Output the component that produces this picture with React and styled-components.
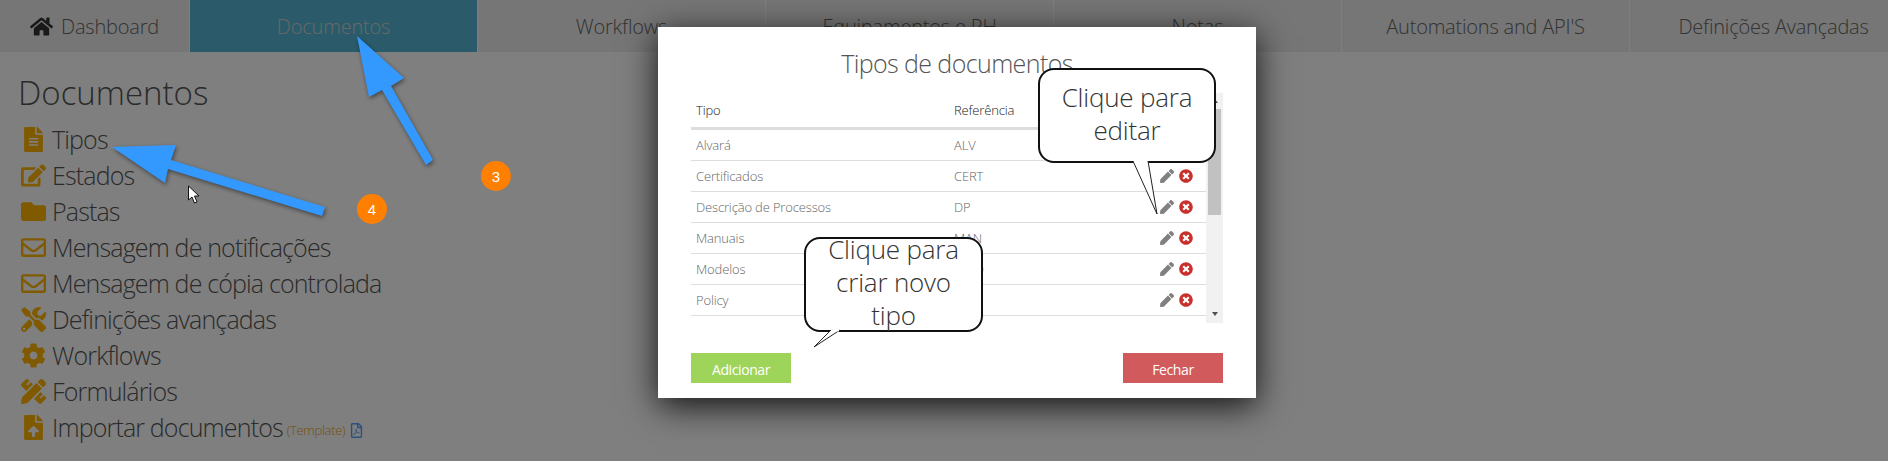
import React from 'react';
import styled, { createGlobalStyle } from 'styled-components';
import {
  FaHome,
  FaFileAlt,
  FaEdit,
  FaFolder,
  FaRegEnvelope,
  FaTools,
  FaCog,
  FaPencilRuler,
  FaFileUpload,
  FaRegFilePdf,
  FaPen,
  FaTimesCircle,
} from 'react-icons/fa';

const GlobalStyle = createGlobalStyle`
  html, body {
    margin: 0;
    padding: 0;
    background: #fff;
    overflow: hidden;
  }
  body {
    font-family: "Open Sans", "Liberation Sans", sans-serif;
    font-weight: 300;
  }
`;

const Page = styled.div`
  position: relative;
  width: 1888px;
  height: 461px;
  overflow: hidden;
`;

const Nav = styled.nav`
  display: grid;
  grid-template-columns: 190px repeat(6, 288px);
  height: 52px;
  background: #ececec;
`;

const NavItem = styled.div`
  display: flex;
  align-items: center;
  justify-content: center;
  gap: 8px;
  font-size: 20px;
  letter-spacing: -0.2px;
  color: ${({ $active }) => ($active ? '#d0d0d0' : '#666')};
  background: ${({ $active }) => ($active ? '#56b6d4' : 'transparent')};
  border-right: 1px solid #fff;
  box-sizing: border-box;
  svg {
    color: #333;
    font-size: 23px;
  }
`;

const Content = styled.main`
  padding: 19px 0 0 18px;
`;

const Heading = styled.h1`
  margin: 0 0 6px;
  font-size: 33px;
  line-height: 44px;
  font-weight: 300;
  color: #555;
`;

const Menu = styled.ul`
  list-style: none;
  margin: 0;
  padding: 0;
`;

const MenuRow = styled.li`
  display: flex;
  align-items: center;
  gap: 6px;
  height: 36px;
  padding-left: 3px;
  font-size: 25px;
  letter-spacing: -0.85px;
  color: #555;
`;

const MenuIcon = styled.span`
  display: flex;
  justify-content: center;
  width: 25px;
  font-size: 25px;
  color: #ffb400;
`;

const Note = styled.small`
  margin: 6px 0 0 -2px;
  font-size: 13px;
  letter-spacing: -0.3px;
  color: #e8a020;
`;

const PdfIcon = styled(FaRegFilePdf)`
  margin: 7px 0 0 -2px;
  font-size: 15px;
  color: #54a0ff;
`;

const Overlay = styled.div`
  position: absolute;
  inset: 0;
  background: rgba(0, 0, 0, 0.5);
`;

const Modal = styled.section`
  position: absolute;
  left: 658px;
  top: 27px;
  width: 598px;
  height: 371px;
  box-sizing: border-box;
  padding: 18px 33px 15px;
  display: flex;
  flex-direction: column;
  background: #fff;
  box-shadow: 0 8px 32px rgba(0, 0, 0, 0.85);
`;

const ModalTitle = styled.h2`
  margin: 0 0 12px;
  height: 36px;
  font-size: 25px;
  line-height: 36px;
  font-weight: 300;
  letter-spacing: -0.6px;
  text-align: center;
  color: #555;
`;

const TableWrap = styled.div`
  display: flex;
  height: 230px;
`;

const Table = styled.div`
  flex: 1;
`;

const Row = styled.div`
  display: grid;
  grid-template-columns: 258px 1fr 46px;
  align-items: center;
  height: ${({ $head }) => ($head ? '37px' : '31px')};
  box-sizing: border-box;
  padding-left: 5px;
  font-size: 13px;
  letter-spacing: -0.15px;
  color: ${({ $head }) => ($head ? '#222' : '#666')};
  border-bottom: ${({ $head }) => ($head ? '3px solid #ddd' : '1px solid #ddd')};
`;

const Actions = styled.div`
  display: flex;
  align-items: center;
  gap: 5px;
`;

const EditIcon = styled(FaPen)`
  font-size: 14px;
  color: #808080;
`;

const DeleteIcon = styled(FaTimesCircle)`
  font-size: 14px;
  color: #c9302c;
`;

const Scrollbar = styled.div`
  display: flex;
  flex-direction: column;
  align-items: center;
  justify-content: space-between;
  width: 17px;
  background: #f1f1f1;
`;

const ScrollThumb = styled.div`
  width: 13px;
  height: 106px;
  margin-top: 6px;
  margin-bottom: auto;
  background: #c1c1c1;
`;

const ScrollArrow = styled.i`
  width: 0;
  height: 0;
  margin: ${({ $up }) => ($up ? '6px 0 0' : '0 0 7px')};
  border-left: 3.5px solid transparent;
  border-right: 3.5px solid transparent;
  border-${({ $up }) => ($up ? 'bottom' : 'top')}: 4px solid #505050;
`;

const Footer = styled.div`
  display: flex;
  justify-content: space-between;
  margin-top: auto;
`;

const Button = styled.button`
  width: 100px;
  height: 30px;
  padding: 3px 0 0;
  border: 0;
  font-family: inherit;
  font-size: 14px;
  font-weight: 400;
  letter-spacing: -0.4px;
  color: #fff;
  background: ${({ $tone }) => ($tone === 'add' ? '#9fd45a' : '#d15a5c')};
`;

const Bubble = styled.div`
  position: absolute;
  left: ${({ $x }) => $x}px;
  top: ${({ $y }) => $y}px;
  width: ${({ $w }) => $w}px;
  height: ${({ $h }) => $h}px;
  box-sizing: border-box;
  display: flex;
  align-items: center;
  justify-content: center;
  padding-bottom: 4px;
  text-align: center;
  font-size: 26px;
  line-height: 33px;
  letter-spacing: -0.2px;
  color: #333;
  background: #fff;
  border: 2px solid #111;
  border-radius: 16px;
`;

const BubbleTail = styled.svg`
  position: absolute;
  left: -2px;
  top: -2px;
  overflow: visible;
`;

const BubbleText = styled.span`
  position: relative;
`;

const Drawing = styled.svg`
  position: absolute;
  left: 0;
  top: 0;
  filter: drop-shadow(1px 2px 2px rgba(0, 0, 0, 0.45));
`;

const Step = styled.div`
  position: absolute;
  left: ${({ $x }) => $x - 15}px;
  top: ${({ $y }) => $y - 15}px;
  width: 30px;
  height: 30px;
  display: flex;
  align-items: center;
  justify-content: center;
  border-radius: 50%;
  background: #ff8000;
  color: #fff;
  font-family: "Liberation Sans", sans-serif;
  font-size: 15px;
  font-weight: 400;
`;

const Cursor = styled.svg`
  position: absolute;
  left: 187px;
  top: 185px;
`;

const navItems = [
  'Documentos',
  'Workflows',
  'Equipamentos e RH',
  'Notas',
  "Automations and API'S",
  'Definições Avançadas',
];

const menu = [
  { icon: FaFileAlt, label: 'Tipos' },
  { icon: FaEdit, label: 'Estados' },
  { icon: FaFolder, label: 'Pastas' },
  { icon: FaRegEnvelope, label: 'Mensagem de notificações' },
  { icon: FaRegEnvelope, label: 'Mensagem de cópia controlada' },
  { icon: FaTools, label: 'Definições avançadas' },
  { icon: FaCog, label: 'Workflows' },
  { icon: FaPencilRuler, label: 'Formulários' },
  { icon: FaFileUpload, label: 'Importar documentos', template: true },
];

const rows = [
  ['Alvará', 'ALV'],
  ['Certificados', 'CERT'],
  ['Descrição de Processos', 'DP'],
  ['Manuais', 'MAN'],
  ['Modelos', 'MOD'],
  ['Policy', 'POL'],
];

const App = () => (
  <Page>
    <GlobalStyle />
    <Nav>
      <NavItem>
        <FaHome />
        Dashboard
      </NavItem>
      {navItems.map((item, i) => (
        <NavItem key={item} $active={i === 0}>{item}</NavItem>
      ))}
    </Nav>
    <Content>
      <Heading>Documentos</Heading>
      <Menu>
        {menu.map(({ icon: Icon, label, template }) => (
          <MenuRow key={label}>
            <MenuIcon><Icon /></MenuIcon>
            {label}
            {template && <Note>(Template)</Note>}
            {template && <PdfIcon />}
          </MenuRow>
        ))}
      </Menu>
    </Content>
    <Overlay />
    <Drawing width="1888" height="461" viewBox="0 0 1888 461">
      <polygon fill="#3399ff" points="357,36 404,78 391,86 433,160 426,165 382,90 369,97" />
      <polygon fill="#3399ff" points="112,147 176,145 171,160 325,207 322,216 168,169 165,183" />
    </Drawing>
    <Step $x={496} $y={176}>3</Step>
    <Step $x={372} $y={209}>4</Step>
    <Cursor width="14" height="20" viewBox="0 0 14 20">
      <path d="M1.5 1 L1.5 15 L5 12 L7.5 18 L10 17 L7.5 11 L12 11 Z" fill="#fff" stroke="#111" strokeWidth="1" />
    </Cursor>
    <Modal>
      <ModalTitle>Tipos de documentos</ModalTitle>
      <TableWrap>
        <Table>
          <Row $head>
            <span>Tipo</span>
            <span>Referência</span>
          </Row>
          {rows.map(([tipo, ref]) => (
            <Row key={tipo}>
              <span>{tipo}</span>
              <span>{ref}</span>
              <Actions>
                <EditIcon />
                <DeleteIcon />
              </Actions>
            </Row>
          ))}
        </Table>
        <Scrollbar>
          <ScrollArrow $up />
          <ScrollThumb />
          <ScrollArrow />
        </Scrollbar>
      </TableWrap>
      <Footer>
        <Button $tone="add">Adicionar</Button>
        <Button $tone="close">Fechar</Button>
      </Footer>
      <Bubble $x={380} $y={41} $w={178} $h={95}>
        <BubbleTail width="178" height="160" viewBox="0 0 178 160">
          <path d="M95 93 L119 146 L110 93" fill="#fff" stroke="#222" strokeWidth="1" />
          <path d="M96 93 L109 93" stroke="#fff" strokeWidth="3" />
        </BubbleTail>
        <BubbleText>Clique para<br />editar</BubbleText>
      </Bubble>
      <Bubble $x={146} $y={210} $w={179} $h={95}>
        <BubbleTail width="179" height="120" viewBox="0 0 179 120">
          <path d="M27 93 L10 110 L36 93" fill="#fff" stroke="#222" strokeWidth="1" />
          <path d="M28 93 L35 93" stroke="#fff" strokeWidth="3" />
        </BubbleTail>
        <BubbleText>Clique para<br />criar novo<br />tipo</BubbleText>
      </Bubble>
    </Modal>
  </Page>
);

export default App;
